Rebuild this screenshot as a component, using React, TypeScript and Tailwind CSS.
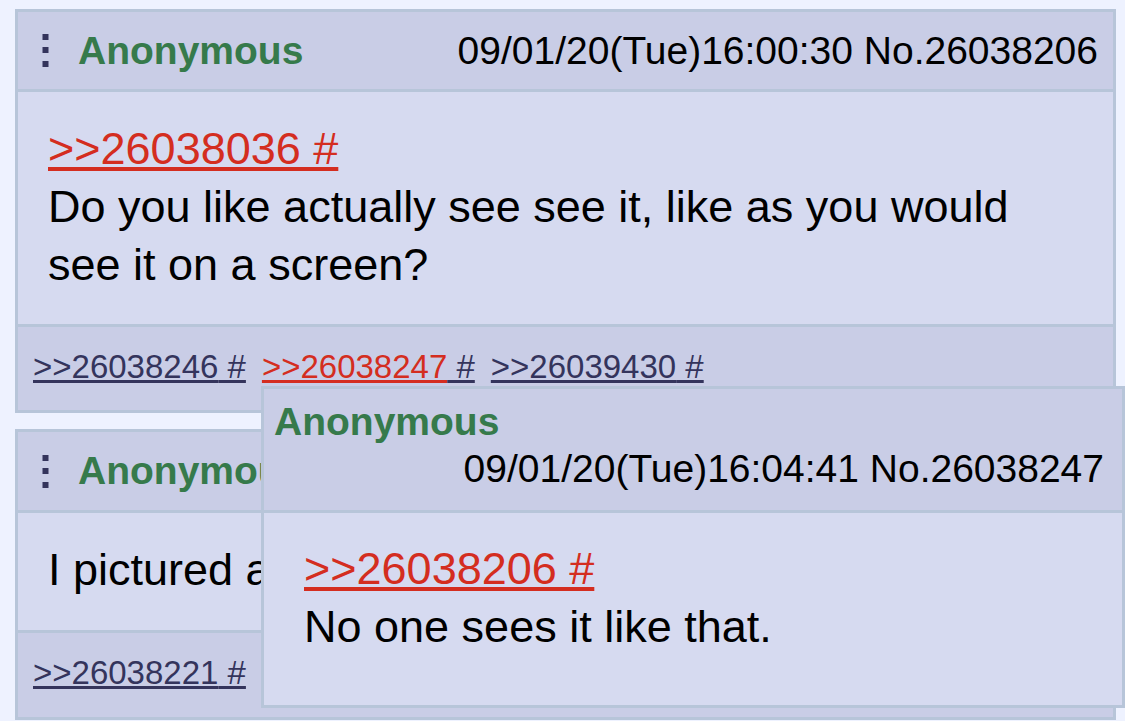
import React from "react";

const Menu = () => (
  <svg width="7" height="33" viewBox="0 0 7 33" className="shrink-0">
    <rect x="0.5" y="0" width="6" height="6" fill="#34345c" />
    <rect x="0.5" y="13" width="6" height="6" fill="#34345c" />
    <rect x="0.5" y="27" width="6" height="6" fill="#34345c" />
  </svg>
);

const Quote = ({ n, red }: { n: string; red?: boolean }) => (
  <span className="whitespace-pre">
    <a className={`underline ${red ? "text-[#d42d20] decoration-[#d42d20]" : "text-[#34345c]"}`}>{">>" + n}</a>
    <a className="underline text-[#34345c]">{" #"}</a>
  </span>
);

const Header = ({ date, h }: { date?: string; h: string }) => (
  <div className={`flex items-center ${h} bg-[#c9cde6] border-b-[3px] border-[#b7c5d9] pl-[24px] pr-[15px] whitespace-nowrap`}>
    <Menu />
    <span className="ml-[29px] font-bold text-[#367a4b]">Anonymous</span>
    {date && <span className="ml-auto text-black">{date}</span>}
  </div>
);

export default function App() {
  return (
    <div className="relative w-[1125px] h-[721px] overflow-hidden bg-[#eef2ff] font-['Liberation_Sans',Arial,sans-serif] text-[39px] leading-[48px] text-black">
      <div className="flex flex-col gap-[16px] pt-[9px] pl-[15px]">
        {/* Post 1 */}
        <div className="w-[1101px] border-[3px] border-[#b7c5d9] bg-[#d6daf0]">
          <Header h="h-[80px]" date="09/01/20(Tue)16:00:30 No.26038206" />
          <div className="pl-[30px] pt-[28px] pb-[30px] text-[45px] leading-[58px] border-b-[3px] border-[#b7c5d9]">
            <div>
              <a className="underline text-[#d42d20]">{">>26038036 #"}</a>
            </div>
            <div>Do you like actually see see it, like as you would</div>
            <div>see it on a screen?</div>
          </div>
          <div className="bg-[#c9cde6] pl-[15px] pt-[20px] pb-[23px] text-[33px] leading-[40px] flex gap-[16px]">
            <Quote n="26038246" />
            <Quote n="26038247" red />
            <Quote n="26039430" />
          </div>
        </div>

        {/* Post 2 */}
        <div className="w-[1101px] border-[3px] border-[#b7c5d9] bg-[#d6daf0]">
          <Header h="h-[81px]" />
          <div className="pl-[30px] pt-[28px] pb-[31px] text-[45px] leading-[58px] border-b-[3px] border-[#b7c5d9] whitespace-nowrap">
            <div>I pictured a</div>
          </div>
          <div className="bg-[#c9cde6] pl-[15px] pt-[20px] pb-[24px] text-[33px] leading-[40px] flex gap-[16px]">
            <Quote n="26038221" />
          </div>
        </div>
      </div>

      {/* Hover popup */}
      <div className="absolute left-[261px] top-[386px] w-[864px] border-[3px] border-[#b7c5d9] bg-[#d6daf0]">
        <div className="bg-[#c9cde6] border-b-[3px] border-[#b7c5d9] pl-[10px] pr-[18px] pt-[9px] pb-[18px] leading-[47px] whitespace-nowrap">
          <div className="font-bold text-[#367a4b]">Anonymous</div>
          <div className="text-right">09/01/20(Tue)16:04:41 No.26038247</div>
        </div>
        <div className="pl-[40px] pt-[27px] pb-[49px] text-[45px] leading-[58px]">
          <div>
            <a className="underline text-[#d42d20]">{">>26038206 #"}</a>
          </div>
          <div>No one sees it like that.</div>
        </div>
      </div>
    </div>
  );
}
